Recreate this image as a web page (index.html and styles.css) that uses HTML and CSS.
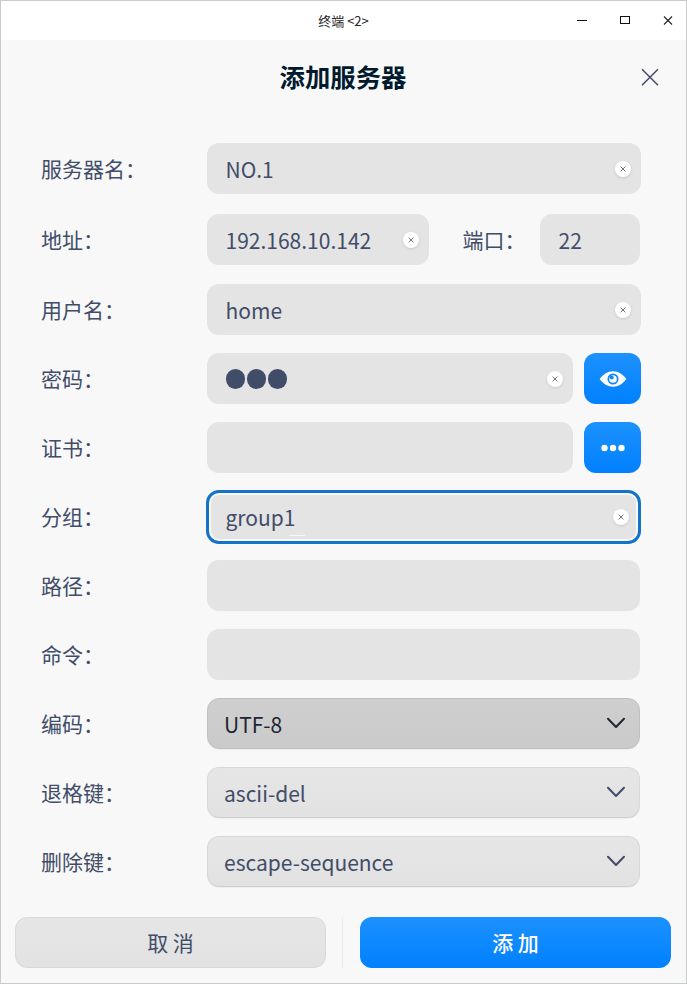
FILE: index.html
```html
<!DOCTYPE html>
<html lang="zh-CN">
<head>
<meta charset="utf-8">
<title>终端 &lt;2&gt;</title>
<link rel="stylesheet" href="styles.css">
</head>
<body>
<svg class="defs" width="0" height="0">
  <symbol id="clear" viewBox="0 0 16 16"><path d="M5.600 5.600l4.800 4.800M10.400 5.600l-4.800 4.800" fill="none" stroke="#666" stroke-width="0.9"/></symbol>
  <symbol id="chevron" viewBox="0 0 20 12"><path d="M2 1.800l8 8.200 8-8.200" fill="none" stroke="currentColor" stroke-width="2" stroke-linecap="round" stroke-linejoin="round"/></symbol>
</svg>
<div class="window">
  <div class="titlebar">
    <span class="window-title">终端 &lt;2&gt;</span>
    <div class="controls">
      <svg width="12" height="12"><path d="M1 5.500h10" stroke="#111" fill="none"/></svg>
      <svg width="12" height="12"><rect x="1.500" y="1.500" width="9" height="7" stroke="#111" fill="none"/></svg>
      <svg width="12" height="12"><path d="M2 1.500l8 8M10 1.500l-8 8" stroke="#222" fill="none" stroke-width="1.100"/></svg>
    </div>
  </div>
  <div class="header">
    <h1>添加服务器</h1>
    <svg class="close" width="18" height="18"><path d="M1 1.200l16 16M17 1.200L1 17.200" stroke="#414d68" fill="none" stroke-width="1.500"/></svg>
  </div>
  <div class="form">
    <div class="row name-row"><span class="label">服务器名：</span><div class="field"><span>NO.1</span><svg class="clear"><use href="#clear"/></svg></div></div>
    <div class="row address-row short"><span class="label">地址：</span><div class="field address"><span>192.168.10.142</span><svg class="clear"><use href="#clear"/></svg></div><span class="port-label">端口：</span><div class="field">22</div></div>
    <div class="row"><span class="label">用户名：</span><div class="field"><span>home</span><svg class="clear"><use href="#clear"/></svg></div></div>
    <div class="row"><span class="label">密码：</span><div class="field"><span class="password"><i></i><i></i><i></i></span><svg class="clear"><use href="#clear"/></svg></div>
      <div class="action"><svg width="28" height="18" viewBox="0 0 28 18"><path d="M.7 9C4.200 4.200 8.800 1.300 14 1.300S23.800 4.200 27.300 9C23.800 13.800 19.200 16.700 14 16.700S4.200 13.800.7 9z" fill="#fff"/><circle cx="14" cy="9" r="4.700" fill="#fff" stroke="#0c86ff" stroke-width="1.700"/><circle cx="12.700" cy="7.500" r="2" fill="#0c86ff"/></svg></div></div>
    <div class="row"><span class="label">证书：</span><div class="field"></div>
      <div class="action"><svg width="24" height="8"><g fill="#fff"><circle cx="3.500" cy="4" r="3.200"/><circle cx="12" cy="4" r="3.200"/><circle cx="20.500" cy="4" r="3.200"/></g></svg></div></div>
    <div class="row short"><span class="label">分组：</span><div class="field focused"><span>group1</span><svg class="clear"><use href="#clear"/></svg></div></div>
    <div class="row short"><span class="label">路径：</span><div class="field"></div></div>
    <div class="row short"><span class="label">命令：</span><div class="field"></div></div>
    <div class="row short"><span class="label">编码：</span><div class="field select hover"><span>UTF-8</span><svg class="chevron"><use href="#chevron"/></svg></div></div>
    <div class="row short"><span class="label">退格键：</span><div class="field select"><span>ascii-del</span><svg class="chevron"><use href="#chevron"/></svg></div></div>
    <div class="row short"><span class="label">删除键：</span><div class="field select"><span>escape-sequence</span><svg class="chevron"><use href="#chevron"/></svg></div></div>
  </div>
  <div class="footer">
    <div class="button">取 消</div>
    <div class="divider"></div>
    <div class="button primary">添 加</div>
  </div>
</div>
</body>
</html>
```
FILE: styles.css
```css
* { box-sizing: border-box; }
body { margin: 0; font-family: "Noto Sans CJK SC", sans-serif; }
svg { display: block; flex: none; }
.defs { position: absolute; }
.window {
  width: 687px; height: 984px; overflow: hidden;
  display: flex; flex-direction: column;
  border: 1px solid #c9cbcd; background: #f8f8f8;
  color: #414d68; font-size: 21px; line-height: 30px;
}
.titlebar {
  flex: none; height: 39px; background: #fff; color: #222;
  display: grid; grid-template-columns: 1fr auto 1fr; align-items: center;
}
.window-title { grid-column: 2; font-size: 13px; line-height: 20px; }
.controls { display: flex; justify-content: flex-end; gap: 31px; padding-right: 12px; }
.header {
  flex: none; height: 103px; padding: 18px 27px 0 0;
  display: grid; grid-template-columns: 1fr auto 1fr; align-items: start;
}
h1 { grid-column: 2; margin: 0 0 0 26px; font-size: 25.4px; line-height: 36px; font-weight: 700; color: #001a2e; }
.close { justify-self: end; margin-top: 10px; }
.form { padding: 0 45px 0 40px; }
.row { display: flex; height: 51px; margin-bottom: 18px; align-items: center; }
.name-row { margin-bottom: 20px; }
.address-row { margin-bottom: 19px; }
.short { padding-right: 1px; }
.label { width: 166px; flex: none; white-space: nowrap; padding-bottom: 1px; }
.field {
  flex: 1; min-width: 0; height: 51px; padding: 1px 10px 0 18.500px;
  display: flex; align-items: center; justify-content: space-between;
  border-radius: 12px; background: #e4e4e4; white-space: nowrap;
}
.address { flex: 0 0 222px; }
.port-label { width: 111px; padding: 0 0 1px 33.500px; flex: none; white-space: nowrap; }
.clear {
  width: 16px; height: 16px; border-radius: 50%;
  background: #fff; box-shadow: 0 1px 3px rgba(0, 0, 0, .12);
}
.password { display: flex; gap: 1.500px; }
.password i { width: 19.500px; height: 19.500px; border-radius: 50%; background: #414d68; }
.action {
  flex: none; width: 57px; height: 51px; margin-left: 11px; padding: 1px 0 0 1px;
  display: flex; align-items: center; justify-content: center;
  border-radius: 12px; background: linear-gradient(#1d91ff, #0081ff);
}
.focused {
  position: relative; align-self: flex-start; height: 52px; padding-top: 0; padding-right: 11px;
  box-shadow: inset 0 0 0 4px #f8f8f8; outline: 3px solid #1373c9; outline-offset: -2px;
}
.focused span { margin-top: -1px; }
.focused::after {
  content: ""; position: absolute; left: 82px; bottom: 7px;
  width: 16px; height: 1px; background: #f8f8f8;
}
.select {
  padding: 1px 13px 0 16px; border: 1px solid #d8d8d8; border-bottom-color: #cfcfcf;
  background: linear-gradient(#e6e6e6, #e2e2e2); box-shadow: 0 1px 1px rgba(0, 0, 0, .04);
}
.hover { color: #1f2533; background: linear-gradient(#cfcfcf, #cacaca); border-color: #c0c0c0; }
.chevron { width: 20px; height: 12px; margin-top: -2px; }
.footer { display: flex; padding: 12px 15px 0 14px; }
.button {
  flex: none; width: 311px; height: 51px; padding-bottom: 1px;
  display: flex; align-items: center; justify-content: center;
  border: 1px solid #d8d8d8; border-radius: 12px; background: linear-gradient(#e6e6e6, #e2e2e2);
}
.divider { width: 1px; margin: 0 17px 0 16px; background: #ececec; }
.primary { border: 0; color: #fff; font-weight: 500; background: linear-gradient(#1d91ff, #0081ff); }
```
